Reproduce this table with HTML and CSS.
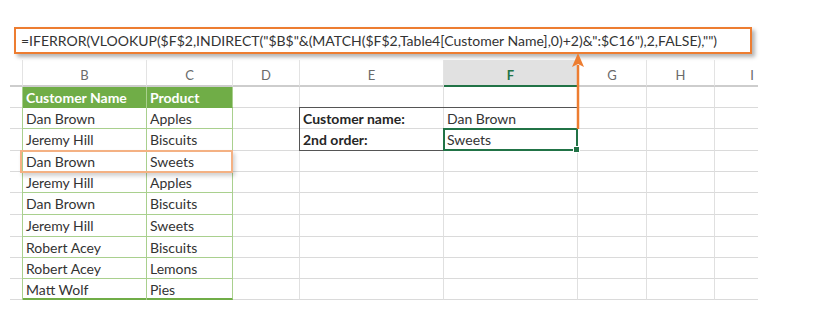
FILE: index.html
```html
<!DOCTYPE html>
<html lang="en">
<head>
    <meta charset="UTF-8">
    <title>IFERROR VLOOKUP second match</title>
    <link rel="stylesheet" href="styles.css">
</head>
<body>
    <div class="page">
        <!-- formula bar -->
        <div class="formula-bar">=IFERROR(VLOOKUP($F$2,INDIRECT("$B$"&amp;(MATCH($F$2,Table4[Customer Name],0)+2)&amp;":$C16"),2,FALSE),"")</div>

        <!-- worksheet -->
        <div class="sheet">
            <div class="col-head"></div>
            <div class="col-head">B</div>
            <div class="col-head">C</div>
            <div class="col-head">D</div>
            <div class="col-head">E</div>
            <div class="col-head active">F</div>
            <div class="col-head">G</div>
            <div class="col-head">H</div>
            <div class="col-head last-col">I</div>

            <div class="cell"></div>
            <div class="cell tbl th">Customer Name</div>
            <div class="cell tbl th">Product</div>
            <div class="cell"></div><div class="cell"></div><div class="cell"></div><div class="cell"></div><div class="cell"></div><div class="cell"></div>

            <div class="cell"></div>
            <div class="cell tbl">Dan Brown</div>
            <div class="cell tbl">Apples</div>
            <div class="cell"></div>
            <div class="cell bold">Customer name:</div>
            <div class="cell">Dan Brown</div>
            <div class="cell"></div><div class="cell"></div><div class="cell"></div>

            <div class="cell"></div>
            <div class="cell tbl">Jeremy Hill</div>
            <div class="cell tbl">Biscuits</div>
            <div class="cell"></div>
            <div class="cell bold">2nd order:</div>
            <div class="cell">Sweets</div>
            <div class="cell"></div><div class="cell"></div><div class="cell"></div>

            <div class="cell"></div>
            <div class="cell tbl">Dan Brown</div>
            <div class="cell tbl">Sweets</div>
            <div class="cell"></div><div class="cell"></div><div class="cell"></div><div class="cell"></div><div class="cell"></div><div class="cell"></div>

            <div class="cell"></div>
            <div class="cell tbl">Jeremy Hill</div>
            <div class="cell tbl">Apples</div>
            <div class="cell"></div><div class="cell"></div><div class="cell"></div><div class="cell"></div><div class="cell"></div><div class="cell"></div>

            <div class="cell"></div>
            <div class="cell tbl">Dan Brown</div>
            <div class="cell tbl">Biscuits</div>
            <div class="cell"></div><div class="cell"></div><div class="cell"></div><div class="cell"></div><div class="cell"></div><div class="cell"></div>

            <div class="cell"></div>
            <div class="cell tbl">Jeremy Hill</div>
            <div class="cell tbl">Sweets</div>
            <div class="cell"></div><div class="cell"></div><div class="cell"></div><div class="cell"></div><div class="cell"></div><div class="cell"></div>

            <div class="cell"></div>
            <div class="cell tbl">Robert Acey</div>
            <div class="cell tbl">Biscuits</div>
            <div class="cell"></div><div class="cell"></div><div class="cell"></div><div class="cell"></div><div class="cell"></div><div class="cell"></div>

            <div class="cell"></div>
            <div class="cell tbl">Robert Acey</div>
            <div class="cell tbl">Lemons</div>
            <div class="cell"></div><div class="cell"></div><div class="cell"></div><div class="cell"></div><div class="cell"></div><div class="cell"></div>

            <div class="cell"></div>
            <div class="cell tbl last">Matt Wolf</div>
            <div class="cell tbl last">Pies</div>
            <div class="cell"></div><div class="cell"></div><div class="cell"></div><div class="cell"></div><div class="cell"></div><div class="cell"></div>

            <!-- outlines laid over the cells, placed by grid area -->
            <div class="frame lookup-box"></div>
            <div class="frame selected"><span class="handle"></span></div>
            <div class="frame match-row"></div>
        </div>

        <svg class="arrow" width="20" height="80" viewBox="0 0 20 80">
            <line x1="10" y1="12" x2="10" y2="76" stroke="#ed7d31" stroke-width="2.5"/>
            <polygon points="10,0 16,14 10,11 4,14" fill="#ed7d31"/>
        </svg>
    </div>
</body>
</html>
```

FILE: styles.css
```css
body {
    margin: 0;
    background: #fff;
    font-family: Lato, "Open Sans", sans-serif;
    color: #333;
}
.page {
    position: relative;
    width: 824px;
    height: 313px;
    overflow: hidden;
}
.formula-bar {
    margin: 27px 0 0 14px;
    width: 738px;
    height: 27px;
    box-sizing: border-box;
    border: 2px solid #ed7d31;
    padding: 0 0 0 5px;
    font-size: 14px;
    line-height: 23px;
    white-space: nowrap;
    color: #333;
    box-shadow: 3px 3px 4px rgba(0, 0, 0, 0.3);
}

/* grid of columns A..I */
.sheet {
    position: relative;
    display: grid;
    grid-template-columns: 13px 124px 86px 67px 144px 134px 69px 68px 43px;
    grid-template-rows: 27px 21px 21px 22px 21px 21px 22px 22px 21px 21px 21px;
    margin: 6px 0 0 10px;
    width: 748px;
    font-size: 14px;
}
.col-head {
    box-sizing: border-box;
    border-right: 1px solid #e3e3e3;
    border-bottom: 2px solid #cdcdcd;
    text-align: center;
    line-height: 31px;
    color: #6a6a6a;
    font-size: 13px;
}
.col-head.last-col {
    border-right: none;
    text-align: right;
    padding-right: 4px;
}
.col-head.active {
    background: #e1e1e1;
    border-bottom: 2px solid #217346;
    color: #217346;
    font-weight: bold;
}
.cell {
    box-sizing: border-box;
    border-right: 1px solid #e0e0e0;
    border-bottom: 1px solid #dadada;
    padding: 0 3px;
    line-height: 22px;
    white-space: nowrap;
}
.cell:nth-child(9n) {
    border-right: none;
}
.tbl {
    border-right: 1px solid #a9d08e;
    border-bottom: 1px solid #a9d08e;
    box-shadow: -1px 0 0 #a9d08e;
}
.tbl.th {
    background: #70ad47;
    color: #fff;
    font-weight: bold;
    border-bottom-color: #70ad47;
}
.tbl.last {
    border-bottom: 2px solid #70ad47;
}
.bold {
    font-weight: bold;
    color: #262626;
}

/* outlines sitting over the cells */
.frame {
    position: absolute;
    box-sizing: border-box;
    z-index: 2;
    pointer-events: none;
}
.lookup-box {
    grid-row: 3 / 5;
    grid-column: 5 / 7;
    top: -1px;
    left: -1px;
    right: 0;
    bottom: 0;
    border: 1px solid #555;
}
.selected {
    grid-row: 4 / 5;
    grid-column: 6 / 7;
    top: -1px;
    left: -1px;
    right: 0;
    bottom: 0;
    border: 2px solid #217346;
}
.handle {
    position: absolute;
    right: -4px;
    bottom: -4px;
    width: 5px;
    height: 5px;
    background: #217346;
    border: 1px solid #fff;
}
.match-row {
    grid-row: 5 / 6;
    grid-column: 2 / 4;
    top: -1px;
    left: -3px;
    right: 0;
    bottom: -1px;
    border: 2px solid #f4b183;
    box-shadow: 2px 3px 4px rgba(0, 0, 0, 0.18);
}

.arrow {
    position: absolute;
    left: 568px;
    top: 53px;
    z-index: 3;
}
```
